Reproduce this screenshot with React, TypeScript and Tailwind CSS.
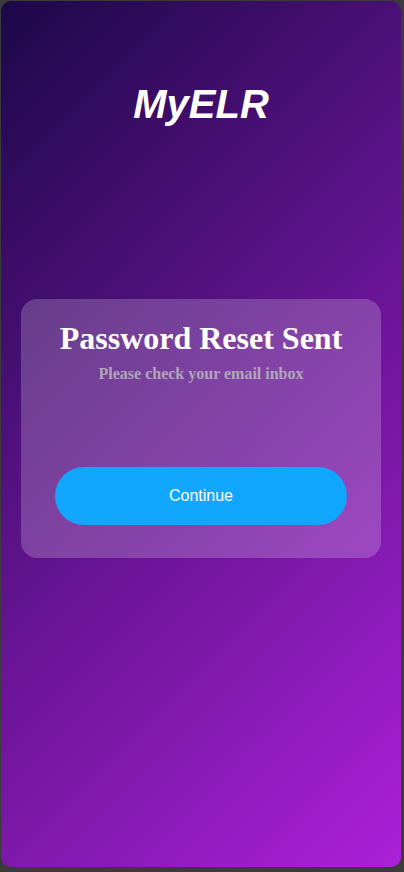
export default function App() {
  return (
    <div className="w-[404px] h-[872px] bg-[#3b3b3b] pt-[1px] pl-[1px]">
      <div className="w-[400px] h-[866px] rounded-[10px] bg-linear-[135deg] from-[#1c0848] to-[#ac20d9] flex flex-col">
        <h1 className="mt-[83px] text-center text-white font-['Liberation_Sans',Arial,sans-serif] font-bold italic text-[40px] leading-[40px]">
          MyELR
        </h1>
        <div className="mt-[175px] mx-5 rounded-2xl bg-white/20 pt-[21px] pb-[33px] px-[34px] flex flex-col items-center">
          <h2 className="text-white font-['Liberation_Serif','Times_New_Roman',serif] font-bold text-[32px] leading-[36px] text-center">
            Password Reset Sent
          </h2>
          <p className="mt-[8px] text-[#b0a6b8] font-['Liberation_Serif','Times_New_Roman',serif] font-bold text-[16px] leading-[20px] text-center">
            Please check your email inbox
          </p>
          <button className="mt-[83px] w-full h-[58px] rounded-full bg-[#12a7fe] text-white font-['Liberation_Sans',Arial,sans-serif] text-[16px]">
            Continue
          </button>
        </div>
      </div>
    </div>
  );
}
